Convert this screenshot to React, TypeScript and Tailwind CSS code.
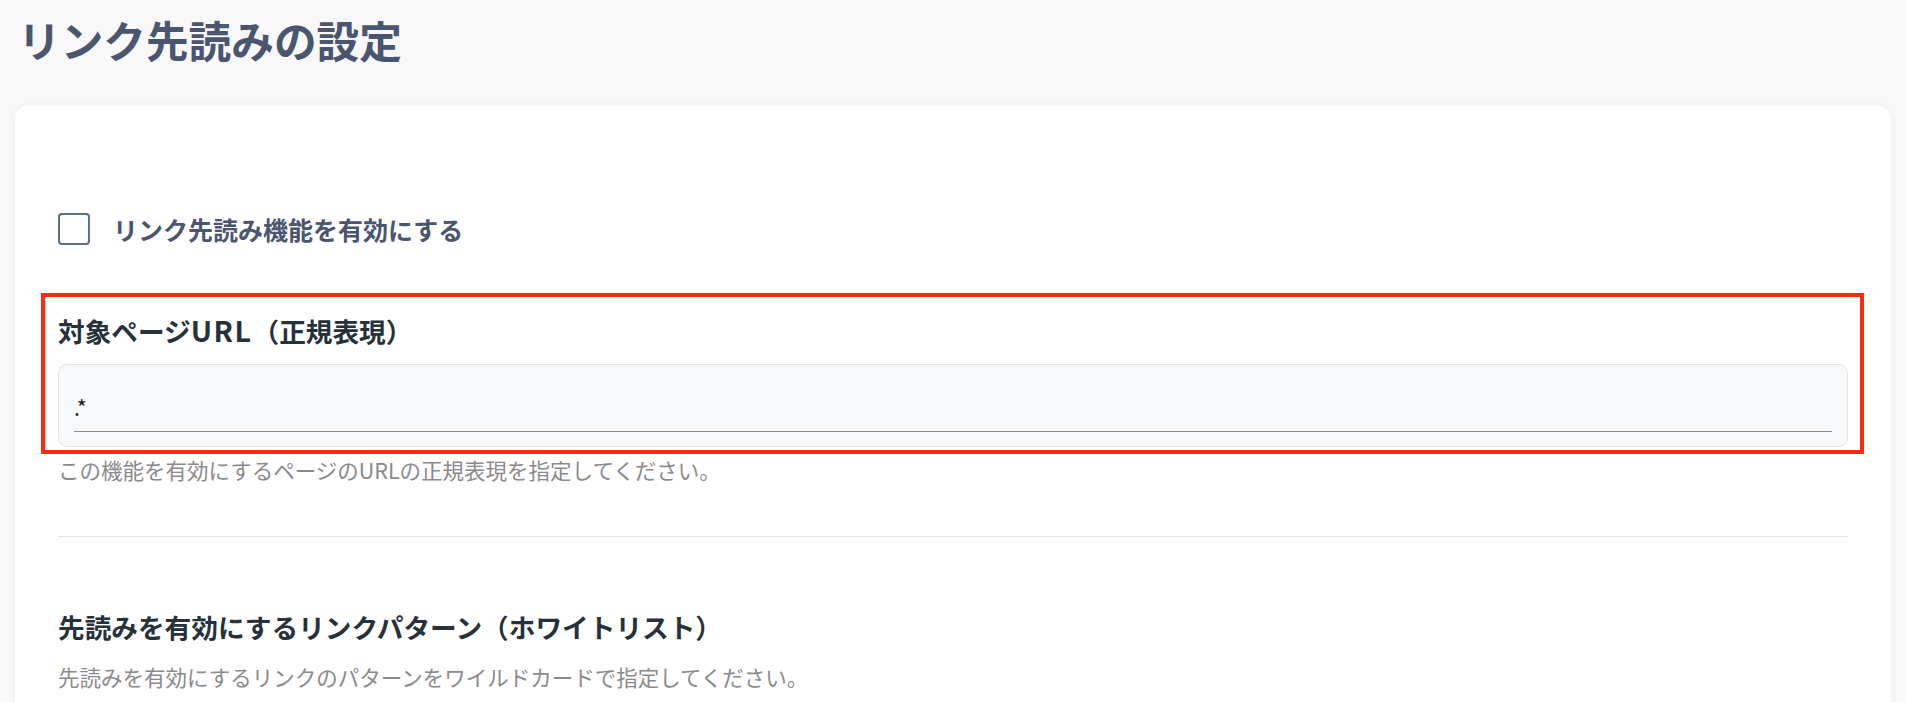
import React from "react";

const font = { fontFamily: '"Noto Sans CJK JP", "Noto Sans", sans-serif' };

export default function App() {
  return (
    <div className="min-h-screen bg-[#f8f8f8] px-[15px]" style={font}>
      <h1 className="pt-[12px] pl-[3px] text-[42.67px] leading-[56px] font-bold text-[#4a5570]">
        リンク先読みの設定
      </h1>
      <div className="mt-[38px] rounded-[13px] bg-white px-[43px] pt-[107px] pb-[60px] shadow-[0_0_10px_rgba(0,0,0,0.04)]">
        <label className="flex h-[32px] items-center">
          <span className="block h-[32px] w-[32px] rounded-[4px] border-[2.67px] border-[#5a727c]" />
          <span className="ml-[23px] text-[25px] leading-[36px] font-bold text-[#4a5570]">
            リンク先読み機能を有効にする
          </span>
        </label>

        <div className="relative mt-[65px]">
          <div className="pointer-events-none absolute -top-[17px] -bottom-[7px] -left-[17px] -right-[16px] border-4 border-[#ff2b0e]" />
          <h2 className="text-[26.67px] leading-[40px] font-bold text-[#25313b]">
            対象ページ<span className="text-[28.5px] tracking-[1.5px]">URL</span>（正規表現）
          </h2>
          <div className="mt-[13px] h-[83px] rounded-[9px] border border-[#e4e4e4] bg-[#f8f9fb] px-[15px] pt-[26px]">
            <div className="border-b border-[#8c8c8c] pb-[8px] text-[21.33px] leading-[32px] text-[#222]">
              .*
            </div>
          </div>
        </div>
        <p className="mt-[7px] text-[21.5px] leading-[32px] text-[#8a8a8a]">
          この機能を有効にするページのURLの正規表現を指定してください。
        </p>

        <div className="mt-[50px] h-px bg-[#e8e8e8]" />

        <h2 className="mt-[70px] text-[26.67px] leading-[40px] font-bold text-[#25313b]">
          先読みを有効にするリンクパターン（ホワイトリスト）
        </h2>
        <p className="mt-[14px] text-[21.5px] leading-[32px] text-[#8a8a8a]">
          先読みを有効にするリンクのパターンをワイルドカードで指定してください。
        </p>
      </div>
    </div>
  );
}
